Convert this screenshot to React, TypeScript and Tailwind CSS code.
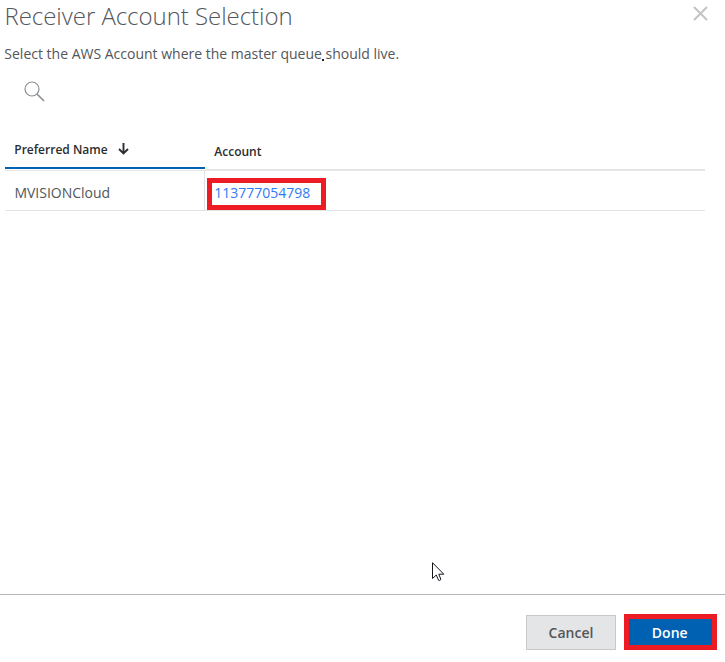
export default function App() {
  return (
    <div className="flex h-[662px] w-[725px] flex-col overflow-hidden bg-white font-['Open_Sans','Noto_Sans',sans-serif] text-[#53565a]">
      <header className="flex h-8 justify-between pl-[4.5px] pr-[17px]">
        <h1 className="whitespace-nowrap text-[24px] leading-8 font-light tracking-[-0.04px]">Receiver Account Selection</h1>
        <svg className="mt-[6px] h-[15px] w-[15px]" viewBox="0 0 15 15" fill="none" stroke="#c4c4c4" strokeWidth="2">
          <path d="M1 1L14 14M14 1L1 14" />
        </svg>
      </header>
      <main className="relative flex flex-1 flex-col pl-[5px] pr-5">
        <p className="-ml-[0.7px] mt-3 h-5 whitespace-nowrap text-[14px] leading-5">Select the AWS Account where the master queue should live.</p>
        <span className="absolute left-[322px] top-[27px] h-[2px] w-[2px] bg-[#222]" />
        <svg className="ml-[19px] mt-[17px] h-[21px] w-[21px] shrink-0" viewBox="0 0 21 21" fill="none" stroke="#8a9096" strokeWidth="1.2">
          <circle cx="8" cy="8" r="7" />
          <path d="M13 13L20 20" strokeWidth="1.7" />
        </svg>
        <div className="mt-[29px] flex h-[40px] text-[12px] font-semibold text-[#2b2d30]">
          <div className="flex w-[200px] flex-col justify-between border-b border-[#e5e5e5]">
            <div className="flex h-[38px] items-center border-b-2 border-[#0061b3] pl-[9.3px]">
              <span className="pt-[2px]">Preferred Name</span>
              <svg className="ml-[10.7px] h-[12px] w-[11px]" viewBox="0 0 11 12" fill="none" stroke="currentColor" strokeWidth="1.9">
                <path d="M5.5 0V10.5M1 6L5.5 10.5L10 6" />
              </svg>
            </div>
          </div>
          <div className="flex flex-1 items-center border-b-2 border-[#e5e5e5] pl-[9.3px] pt-[3px]">Account</div>
        </div>
        <div className="flex h-[40px] border-b border-[#e2e3e4] text-[14px] leading-5">
          <div className="w-[200px] border-r border-[#dfe2e8] pl-[9.4px] pt-3">MVISIONCloud</div>
          <div className="ml-[2px] mt-[7px] h-[32px] w-[119px] border-5 border-[#ed1c24] pl-[2.2px] text-[#2f7af5]">113777054798</div>
        </div>
        <svg className="absolute left-[432px] top-[530px] h-[20px] w-[13px]" viewBox="0 0 13 20" fill="white" stroke="#15151c" strokeWidth="1">
          <path d="M.5.7V16.5L4.3 13L6.5 18.2Q7.7 19 8.9 17.5L6.8 12.2H11.8Z" />
        </svg>
      </main>
      <footer className="flex h-[68px] justify-end gap-2 border-t border-[#b0b5ba] pr-2 text-[14px] font-semibold">
        <button className="mt-5 h-[35px] w-[90px] border border-[#c7c9cb] bg-[#e4e5e6]">Cancel</button>
        <button className="mt-[19px] h-[36px] w-[93px] border-5 border-[#ed1c24] bg-[#0061b3] pr-[1.5px] text-white">Done</button>
      </footer>
    </div>
  );
}
